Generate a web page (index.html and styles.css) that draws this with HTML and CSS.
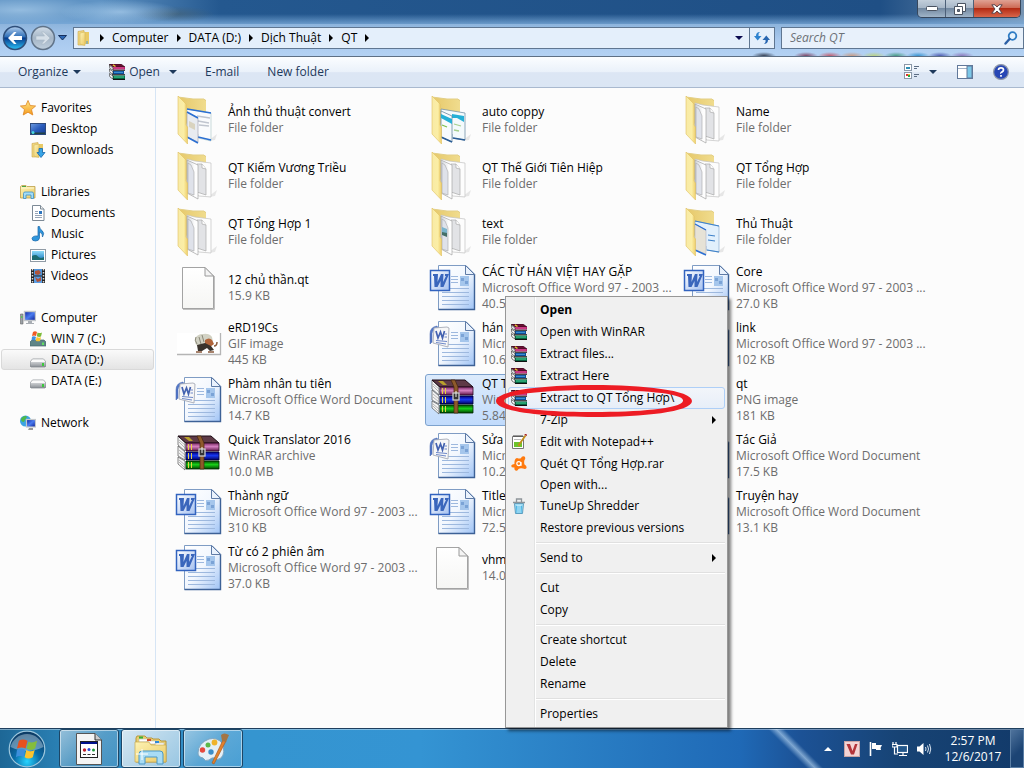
FILE: index.html
```html
<!DOCTYPE html>
<html lang="vi">
<head>
  <meta charset="UTF-8" />
  <meta name="viewport" content="width=device-width, initial-scale=1.0">
  <title>QT</title>
  <link rel="stylesheet" href="styles.css">
</head>
<body>

  <!-- Icon Sprites -->
  <svg class="sprites" aria-hidden="true">
    <defs>
      <linearGradient id="gFolder" x1="0" x2="1" y1="0" y2="1"><stop offset="0" stop-color="#fdf3b4"/><stop offset="1" stop-color="#ecca66"/></linearGradient>
      <linearGradient id="gFlap" x1="0" x2="1"><stop offset="0" stop-color="#f8eaa6"/><stop offset=".6" stop-color="#fbeea5"/><stop offset="1" stop-color="#efcf6c"/></linearGradient>
      <linearGradient id="gBack" x1="0" x2="1"><stop offset="0" stop-color="#e6c869"/><stop offset="1" stop-color="#f0dc8e"/></linearGradient>
      <linearGradient id="gLeaf" x1="0" x2="1"><stop offset="0" stop-color="#cfd3da"/><stop offset=".7" stop-color="#fdfdfd"/><stop offset="1" stop-color="#fff"/></linearGradient>
      <linearGradient id="gSheet" x1="0" x2="1" y1="0" y2="1"><stop offset="0" stop-color="#fff"/><stop offset=".5" stop-color="#f2f7fe"/><stop offset="1" stop-color="#9fc3f5"/></linearGradient>
      <linearGradient id="gPaper" x1="0" x2="0" y1="0" y2="1"><stop offset="0" stop-color="#fff"/><stop offset="1" stop-color="#f6f6f4"/></linearGradient>
      <linearGradient id="gW" x1="0" x2="1" y1="0" y2="1"><stop offset="0" stop-color="#fff"/><stop offset="1" stop-color="#a4c0f0"/></linearGradient>
      <linearGradient id="gPink" x1="0" x2="0" y1="0" y2="1"><stop offset="0" stop-color="#7c2b66"/><stop offset=".45" stop-color="#d480c0"/><stop offset="1" stop-color="#5c1548"/></linearGradient>
      <linearGradient id="gNavy" x1="0" x2="0" y1="0" y2="1"><stop offset="0" stop-color="#00007c"/><stop offset=".45" stop-color="#1838f0"/><stop offset="1" stop-color="#00005e"/></linearGradient>
      <linearGradient id="gGreen" x1="0" x2="0" y1="0" y2="1"><stop offset="0" stop-color="#004d00"/><stop offset=".45" stop-color="#18d018"/><stop offset="1" stop-color="#004400"/></linearGradient>
      <linearGradient id="gNavBtn" x1="0" x2="0" y1="0" y2="1"><stop offset="0" stop-color="#b5d0ee"/><stop offset=".45" stop-color="#2f6fb8"/><stop offset=".5" stop-color="#073a8c"/><stop offset="1" stop-color="#2cc3f7"/></linearGradient>
      <linearGradient id="gNavOff" x1="0" x2="0" y1="0" y2="1"><stop offset="0" stop-color="#d2dde8"/><stop offset=".5" stop-color="#a4b5c6"/><stop offset="1" stop-color="#c0cfdd"/></linearGradient>
      <linearGradient id="gScreen" x1="0" x2="1" y1="0" y2="1"><stop offset="0" stop-color="#0a1f9c"/><stop offset=".5" stop-color="#4a7cf0"/><stop offset="1" stop-color="#0a1a90"/></linearGradient>
      <linearGradient id="gDesk" x1="0" x2="1" y1="0" y2="1"><stop offset="0" stop-color="#6d9be0"/><stop offset=".5" stop-color="#2a5cbc"/><stop offset="1" stop-color="#163c92"/></linearGradient>
      <linearGradient id="gDrive" x1="0" x2="0" y1="0" y2="1"><stop offset="0" stop-color="#f2f3f4"/><stop offset="1" stop-color="#8b9096"/></linearGradient>
      <linearGradient id="gSky" x1="0" x2="0" y1="0" y2="1"><stop offset="0" stop-color="#8fdcf8"/><stop offset="1" stop-color="#1878c0"/></linearGradient>
      <radialGradient id="gOrb" cx=".5" cy=".85" r=".8"><stop offset="0" stop-color="#27d4ff"/><stop offset=".45" stop-color="#0b6da8"/><stop offset="1" stop-color="#0d3c66"/></radialGradient>
      <linearGradient id="gStar" x1="0" x2="0" y1="0" y2="1"><stop offset="0" stop-color="#ffe98a"/><stop offset="1" stop-color="#f59a1c"/></linearGradient>
    </defs>

    <!-- folder shell, the papers are drawn on top by each folder kind -->
    <symbol id="folder-back" viewBox="0 0 48 48">
      <path d="M33 45L42 38L40 44z" fill="#ddd" opacity=".7"/>
      <path d="M3 1L18 3L29 3Q31 3 31 5V30H12z" fill="url(#gBack)"/>
      <path d="M3 1L18 3H29L31 5" fill="none" stroke="#e3cf86"/>
    </symbol>
    <symbol id="folder-flap" viewBox="0 0 48 48">
      <path d="M3 0L11 8V29L12.500 31V48L3 38z" fill="url(#gFlap)" stroke="#e0c160" stroke-width=".6"/>
    </symbol>
    <symbol id="folder" viewBox="0 0 48 48">
      <use href="#folder-back"/>
      <path d="M12 7L20 9L36 11V45L24 44L12 38z" fill="#fdfdfd" stroke="#c2c2c2" stroke-width=".7"/>
      <path d="M22 12L27 12L31 17V43L22 40z" fill="#e2e3e6" stroke="#a9a9a9" stroke-width=".7"/>
      <path d="M27 12V16L31 17" fill="#fff" stroke="#a9a9a9" stroke-width=".7"/>
      <path d="M12 8L23 13V47L12 41z" fill="url(#gLeaf)" stroke="#a4a4a4" stroke-width=".7"/>
      <path d="M13 11L16 13L19 20V43L13 41z" fill="#dfe2ea" stroke="#a9a9a9" stroke-width=".6"/>
      <use href="#folder-flap"/>
    </symbol>
    <symbol id="folder-pages" viewBox="0 0 48 48">
      <use href="#folder-back"/>
      <path d="M12 13L36 17V45L23 42V38L12 36z" fill="#fafbfd" stroke="#9bb"  stroke-width=".5"/>
      <path d="M12 13L36 17M23 41L36 44" stroke="#2b6fd2" stroke-width="1.400"/>
      <path d="M22 20L35 22M23 25L34 27M24 29L34 30" stroke="#c0c5cf" stroke-width="1.600"/>
      <path d="M12 16L23 22V46L12 41z" fill="#e8ebf0" stroke="#99a" stroke-width=".6"/>
      <path d="M12 16L23 22M12 41L23 47" stroke="#2b6fd2" stroke-width="1.600"/>
      <path d="M14 25L20 28V34L14 31z" fill="#d9d3bf"/>
      <use href="#folder-flap"/>
    </symbol>
    <symbol id="folder-blue" viewBox="0 0 48 48">
      <use href="#folder-back"/>
      <path d="M12 13L36 17V44L23 42V38L12 36z" fill="#f4fafc" stroke="#7592a8" stroke-width=".8"/>
      <path d="M23 18L35 20V26L28 22L23 22z" fill="#25b0d6"/>
      <path d="M25 28L32 30M25 34L30 35" stroke="#a5cf8d" stroke-width="1.300"/>
      <path d="M12 15L23 20V46L12 41z" fill="#f7fbfd" stroke="#6a88a0" stroke-width=".8"/>
      <path d="M12 18L23 23V28L12 22z" fill="#25b0d6"/>
      <path d="M13 29L18 31" stroke="#7cc04d" stroke-width="1.300"/>
      <path d="M12 41L23 46M24 42L36 44" stroke="#2a5d96" stroke-width="1.600"/>
      <use href="#folder-flap"/>
    </symbol>
    <symbol id="folder-lines" viewBox="0 0 48 48">
      <use href="#folder-back"/>
      <path d="M12 13L36 18V44L23 42V38L12 36z" fill="#e2f0fc" stroke="#8aaed0" stroke-width=".7"/>
      <path d="M12 13L36 18M25 27L32 28M25 32L32 33M24 42L36 44" stroke="#3d80c9" stroke-width="1.200"/>
      <path d="M12 16L23 22V46L12 42z" fill="#e6e2d6" stroke="#aab" stroke-width=".5"/>
      <path d="M12 16L23 22M12 42L23 47" stroke="#2b6fd2" stroke-width="1.400"/>
      <use href="#folder-flap"/>
    </symbol>
    <symbol id="folder-text" viewBox="0 0 48 48">
      <use href="#folder"/>
      <path d="M13 19L18 21V28L13 26z" fill="#7ab4cc"/>
      <path d="M13 24L18 25V29L13 27z" fill="#456f68"/>
    </symbol>

    <symbol id="blank" viewBox="0 0 48 48">
      <path d="M7.500 3.500H30L38.500 12V44.500H7.500z" fill="url(#gPaper)" stroke="#a3a3a3"/>
      <path d="M39.500 12V45.500H8" fill="none" stroke="#c0c0c0"/>
      <path d="M30 3.500V12H38.500z" fill="#f4f4f4" stroke="#9a9a9a"/>
    </symbol>

    <symbol id="page" viewBox="0 0 48 48">
      <path d="M9.500 1.500H37L45.500 10V45.500H9.500z" fill="url(#gSheet)" stroke="#7f9cc4"/>
      <path d="M45.500 10V45.500H9.500" fill="none" stroke="#3d6196" stroke-width="1.400"/>
      <path d="M36.500 1.500V10.500H45.500z" fill="#eaf2fd" stroke="#5f7ba6"/>
      <path d="M22 12.500H29M22 15.500H29M22 18.500H29M13 24.500H40M13 28.500H40M13 32.500H40M13 36.500H40M13 40.500H40" stroke="#9db8de"/>
      <rect x="31" y="12" width="9" height="10" fill="#a5c6ec"/><path d="M32 14h3v3h-3zM36 17h3v3h-3z" fill="#7ba3d6"/>
    </symbol>
    <symbol id="doc" viewBox="0 0 48 48">
      <use href="#page"/>
      <rect x="1.500" y="6.500" width="19" height="20" fill="url(#gW)" stroke="#3263bf" stroke-width="1.500"/>
      <path d="M4 10H9L8.500 18L12 10H14.500L14 18L17 12H16V10H20L14.500 23H11.500L11.500 17L8.500 23H5.500L5 12H4z" fill="#3a66bc"/>
    </symbol>
    <symbol id="docx" viewBox="0 0 48 48">
      <use href="#page"/>
      <path d="M8 6Q1 7 1 14V24L3 22V13Q4 9 9 8z" fill="#5478c6" stroke="#3c5fae" stroke-width=".5"/>
      <path d="M5 8L18 7L20 8L19 27L4 23z" fill="#f7f7f8" stroke="#a6aab6" stroke-width=".9"/>
      <path d="M7 11L9 18L11.500 12L13.500 18L15.500 11" fill="none" stroke="#4462b0" stroke-width="1.700"/>
      <path d="M15.500 14H18M15.500 17H18M7 20.500L18 21.500M7 22.500L17 24" stroke="#6e88c8"/>
    </symbol>

    <symbol id="rar" viewBox="0 0 48 48">
      <path d="M3 4L10 11V19L3 13zM3 14L10 20V28L3 24zM3 25L10 29V38L3 32z" fill="#f4f4f4" stroke="#555" stroke-width=".7"/>
      <path d="M4 8L10 13M4 10L10 16M4 18L10 23M4 21L10 26M4 28L10 33M4 30L10 36" stroke="#999" stroke-width=".7"/>
      <path d="M3 4H36L44 11H11z" fill="#5e3a46" stroke="#1d0a14"/>
      <path d="M9 5H14L18 9H14z" fill="#b9a02c"/>
      <path d="M11 11H44V19H11z" fill="url(#gPink)" stroke="#2b0b22" stroke-width=".8"/>
      <path d="M11 20H44V28H11z" fill="url(#gNavy)" stroke="#000035" stroke-width=".8"/>
      <path d="M11 29H44V37H11z" fill="url(#gGreen)" stroke="#002600" stroke-width=".8"/>
      <path d="M13.500 12V18M16.500 12V18M13.500 21V27M16.500 21V27M13.500 30V36M16.500 30V36" stroke="#e5d340"/>
      <path d="M22 4H26L29 11V37H25V11z" fill="#8e5a2b" stroke="#45270d" stroke-width=".7"/>
      <rect x="24" y="17" width="6" height="7" fill="#333" stroke="#ccc" stroke-width="1.300"/><path d="M27 15V21" stroke="#eee"/>
    </symbol>
    <symbol id="rar-small" viewBox="0 0 16 16">
      <path d="M0 0H12L16 3H4z" fill="#6a0f34" stroke="#25040f" stroke-width=".6"/>
      <path d="M4 3H16V5.500H4z" fill="#b8206e"/><path d="M4 4H15" stroke="#ea6aae" stroke-width=".7"/>
      <path d="M3 7H15V10H4z" fill="#0b4d9c"/><path d="M5 8.300H14" stroke="#55b4e8" stroke-width=".8"/>
      <path d="M3 11.500H16V15H4z" fill="#047a4e"/><path d="M5 13H15" stroke="#5fe0a8" stroke-width=".8"/>
      <path d="M0 1L4 4V6L1 4.500zM0 5L4 7.500V10L1 8.500zM0 9.500L4 12V15L1 13z" fill="#fff" stroke="#222" stroke-width=".6"/>
      <path d="M4 6.200H16M3 10.700H16M4 15.400H16" stroke="#111" stroke-width="1.100"/><path d="M4 .8L6.500 2.500" stroke="#e6c52e" stroke-width="1.500"/>
    </symbol>

    <symbol id="gif" viewBox="0 0 48 48">
      <rect x="2" y="13" width="43" height="21" fill="#fff"/>
      <path d="M45.500 13V34.500H2" fill="none" stroke="#b5b5b5" stroke-width="1.300"/>
      <path d="M20 19Q22 14 28 14Q34 13 37 17L38 22L35 27H24Q19 24 20 19z" fill="#d2d2c4"/>
      <path d="M22 24Q19 20 21 17M27 15L29 22M24 17L26 24" stroke="#8a8878" fill="none"/>
      <path d="M30 20Q34 17 37 20L39 24L35 27L30 25z" fill="#b0643a"/>
      <path d="M22 25L30 23L36 26L39 30L35 31L32 28L27 31H23z" fill="#3a332c"/>
      <path d="M21 32H27M33 32H39M39 26Q42 26 42 22" stroke="#8a5a3c" stroke-width="1.500" fill="none"/>
    </symbol>

    <symbol id="folder-small" viewBox="0 0 16 16">
      <path d="M2 1.500L8 .5V15H2z" fill="#f1d880" stroke="#c9a548" stroke-width=".6"/>
      <path d="M8 2H13V14H8z" fill="#e9ca66"/><path d="M4 3L9 2V15.500L4 14z" fill="url(#gFolder)" stroke="#d5b75c" stroke-width=".6"/>
      <path d="M11 11V14" stroke="#4d9bd8"/>
    </symbol>
    <symbol id="star" viewBox="0 0 16 16"><path d="M8 .5L10.200 5.500L15.600 6L11.500 9.600L12.800 15L8 12.200L3.200 15L4.500 9.600L.4 6L5.800 5.500z" fill="url(#gStar)" stroke="#de8521" stroke-width=".8"/></symbol>
    <symbol id="desktop" viewBox="0 0 16 16"><rect x=".5" y="2.500" width="15" height="11" fill="url(#gDesk)" stroke="#2d4a7c"/><path d="M1 11.500H15V13H1z" fill="#244"/><circle cx="3" cy="11.500" r="1.500" fill="#49d6e0"/></symbol>
    <symbol id="download" viewBox="0 0 16 16"><use href="#folder-small"/><path d="M9 6.500H12.500V10.500H15L11 15.500L7 10.500H9z" fill="#38a4e6" stroke="#1668ae" stroke-width=".8"/></symbol>
    <symbol id="library" viewBox="0 0 16 16"><path d="M.5 2.500L2 1.500H6L7 2.500H15V14H.5z" fill="url(#gFolder)" stroke="#bd9f4a" stroke-width=".8"/><path d="M1 4H14" stroke="#fff9d3"/><path d="M2 2.500H6" stroke="#48a848"/><path d="M3.500 14.500V9.500Q3.500 8 5 8H12Q13.500 8 13.500 9.500V14.500H11V11H6V14.500z" fill="#a3dcf6" stroke="#3a8fc8" stroke-width=".8"/></symbol>
    <symbol id="documents" viewBox="0 0 16 16"><path d="M2.500.5H10.500L14 4V15.500H2.500z" fill="#fff" stroke="#7d8a96"/><path d="M10.500.5V4H14" fill="#eee" stroke="#7d8a96"/><path d="M5 6.500H8M5 8.500H8M5 10.500H12M5 12.500H12" stroke="#8b9aae" stroke-width=".9"/><rect x="9" y="6" width="3" height="3" fill="#2d74bd"/></symbol>
    <symbol id="music" viewBox="0 0 16 16"><path d="M8 .5H9.500Q9.500 3 12 4.500Q15 7 12.500 11Q13 7 9.500 6V12Q9 15 5.500 15Q2 15 2 12.500Q2.500 9.500 8 10z" fill="#2f96dc" stroke="#1764a6" stroke-width=".7"/></symbol>
    <symbol id="pictures" viewBox="0 0 16 16"><rect x=".5" y="2.500" width="15" height="12" fill="#fff" stroke="#909ba5"/><rect x="2" y="4" width="12" height="9" fill="url(#gSky)"/><path d="M2 9Q6 7 8 9.500T14 10V13H2z" fill="#1c6c70"/></symbol>
    <symbol id="videos" viewBox="0 0 16 16"><path d="M1 1H15V15H1z" fill="#222"/><path d="M4 1H12V7.500H4z" fill="#4f93d8"/><path d="M4 8.500H12V15H4z" fill="#5b9fe6"/><path d="M5 3L9 2L11 5L8 7L5 6zM5 9L8 11L11 9V13L7 14z" fill="#b0543a"/><path d="M2.500 1V15M13.500 1V15" stroke="#ddd" stroke-width="1.500" stroke-dasharray="1.500 1.500"/></symbol>
    <symbol id="computer" viewBox="0 0 16 16"><rect x="4.500" y="1.500" width="11" height="9" fill="url(#gScreen)" stroke="#c2c6ca" stroke-width="1.400"/><path d="M8 11H12V13H14V14H6V13H8z" fill="#a9aeb4"/><path d="M.5 4H3V14H.5z" fill="#9ca2a8" stroke="#666" stroke-width=".6"/><path d="M1.800 6V8" stroke="#3fd43f"/></symbol>
    <symbol id="drive" viewBox="0 0 16 16"><path d="M2.500 7H13.500L16 10V14L15 15H1L0 14V10z" fill="url(#gDrive)" stroke="#7f858b" stroke-width=".7"/><path d="M2.500 7.500H13.500L15.500 10H.5z" fill="#fafafa"/><rect x="12" y="11" width="2" height="3" fill="#3cc83c"/></symbol>
    <symbol id="windrive" viewBox="0 0 16 16"><path d="M2 9H14L16 11V15H0V11z" fill="#5f8587" stroke="#48686c" stroke-width=".7"/><rect x="12" y="11.500" width="2" height="2.500" fill="#62e062"/><path d="M3 1Q5-.3 7 1L6 5Q4 4 2 5z" fill="#ee5a24"/><path d="M7.500 1.500Q10 2.500 12 1.500L11 5.500Q9 6.500 6.800 5.200z" fill="#7dbb3a"/><path d="M2 5.800Q4 4.800 6 6L5 9.500Q3 8.500 1.500 9.500z" fill="#3f8fe0"/><path d="M6.600 6Q9 7.200 11 6.200L10 10Q8 10.800 5.700 9.700z" fill="#fbc42e"/></symbol>
    <symbol id="network" viewBox="0 0 16 16"><circle cx="5.500" cy="6" r="5.500" fill="#3ba3e2"/><path d="M2 2.500Q6 0 7 2Q5 4 4 7Q1 7 1 4zM6 6Q9 6 8 9L6 11z" fill="#4fb947"/><rect x="6.500" y="4.500" width="9" height="7.500" fill="url(#gScreen)" stroke="#c4c8cc" stroke-width="1.200"/><path d="M9 13H13V15H8z" fill="#999"/></symbol>

    <symbol id="flag-win" viewBox="0 0 24 24"><path d="M3 4Q7 1 12 4L10 12Q6 10 1 12z" fill="#e6511e"/><path d="M13 5Q17 7 22 4L20 12Q16 15 11 12z" fill="#84bd3c"/><path d="M1 13.500Q6 11 9.700 13.500L8 21Q4 18.500 0 21z" fill="#3d8fdc"/><path d="M10.700 13.500Q15 16 19.500 13.500L17.500 21Q13 24 9 21z" fill="#fcc32f"/></symbol>
  </svg>

  <!-- Title Bar -->
  <header class="title-bar">
    <div class="window-controls">
      <button class="win-btn" aria-label="Minimize"><svg width="12" height="5"><rect x=".5" y=".5" width="11" height="4" rx="1" fill="#fff" stroke="#4a5361"/></svg></button>
      <button class="win-btn" aria-label="Restore"><svg width="12" height="12"><path d="M3.500.5H11.500V8.500H3.500z" fill="#fff" stroke="#4a5361"/><path d="M.5 3.500H8.500V11.500H.5z" fill="#fff" stroke="#4a5361"/><path d="M3.500 6.500H5.500V8.500H3.500z" fill="#6b7787" stroke="#4a5361"/></svg></button>
      <button class="win-btn win-close" aria-label="Close"><svg width="12" height="10"><path d="M.8.8H4L6 3L8 .8H11.200L8 5L11.200 9.200H8L6 7L4 9.200H.8L4 5z" fill="#fff" stroke="#58424a"/></svg></button>
    </div>
  </header>

  <!-- Address Row -->
  <div class="address-row">
    <div class="nav-buttons">
      <button class="round-btn" aria-label="Back"><svg width="26" height="26" viewBox="0 0 26 26"><circle cx="13" cy="13" r="11.500" fill="url(#gNavBtn)" stroke="#2f4f7a" stroke-width="1.500"/><path d="M6 13L12 7H14.500L11.500 11H20V15H11.500L14.500 19H12z" fill="#fff"/></svg></button>
      <button class="round-btn" aria-label="Forward"><svg width="26" height="26" viewBox="0 0 26 26"><circle cx="13" cy="13" r="11.500" fill="url(#gNavOff)" stroke="#607388" stroke-width="1.500"/><path d="M20 13L14 7H11.500L14.500 11H6V15H14.500L11.500 19H14z" fill="#d5dfe8" stroke="#a9b8c6" stroke-width=".6"/></svg></button>
      <button class="round-btn" aria-label="Recent pages"><svg width="9" height="6"><path d="M.5.5H8.500L4.500 5z" fill="#2c67b5" stroke="#16305e"/></svg></button>
    </div>
    <nav class="address-bar">
      <svg class="icon"><use href="#folder-small"/></svg>
      <span class="tri"></span>
      <a href="#">Computer</a><span class="tri"></span>
      <a href="#">DATA (D:)</a><span class="tri"></span>
      <a href="#">Dịch Thuật</a><span class="tri"></span>
      <a href="#">QT</a><span class="tri"></span>
      <span class="spacer"></span>
      <button class="history-btn" aria-label="Previous locations"><span class="caret"></span></button>
      <button class="refresh-btn" aria-label="Refresh"><svg width="16" height="14" viewBox="0 0 16 14"><path d="M6 1Q4 2 4.500 5H7.500L3.700 9.500L0 5H2Q2 1 6 1z" fill="#2e83cf"/><path d="M9.500 13Q12 12 11.500 9H8.500L12.300 4.500L16 9H14Q14 13 9.500 13z" fill="#2866b0"/></svg></button>
    </nav>
    <label class="search-box">
      <input type="search" placeholder="Search QT" aria-label="Search QT">
      <svg width="14" height="14" viewBox="0 0 14 14"><circle cx="8.500" cy="5" r="3.800" fill="#e8f4fd" stroke="#2f7cc4" stroke-width="1.800"/><path d="M5.500 8L1.500 12.500" stroke="#2b5fa5" stroke-width="2.400" stroke-linecap="round"/></svg>
    </label>
  </div>

  <!-- Command Bar -->
  <div class="command-bar">
    <button class="cmd">Organize <span class="caret"></span></button>
    <button class="cmd cmd-open"><svg class="icon"><use href="#rar-small"/></svg>Open <span class="caret"></span></button>
    <button class="cmd">E-mail</button>
    <button class="cmd">New folder</button>
    <span class="spacer"></span>
    <div class="view-tools">
      <button class="cmd cmd-view" aria-label="Change your view"><svg class="icon" viewBox="0 0 16 16"><rect x=".5" y=".5" width="7" height="6" fill="#fff" stroke="#8a98a8"/><path d="M2 3H6V5H2z" fill="#2e8fb5"/><rect x=".5" y="8.500" width="7" height="6" fill="#fff" stroke="#8a98a8"/><path d="M2 10H4V12H2z" fill="#d33"/><path d="M4 11H6V13H4z" fill="#2a4"/><path d="M4 10H6V11H4z" fill="#eb3"/><path d="M10 2.500H15M10 4.500H13M10 10.500H15M10 12.500H13" stroke="#5e6f85"/></svg><span class="caret"></span></button>
      <button class="cmd" aria-label="Show the preview pane"><svg class="icon" viewBox="0 0 16 16"><rect x=".5" y="1.500" width="15" height="13" fill="#fff" stroke="#61789a"/><path d="M1 4.500H10" stroke="#9fb0c5"/><path d="M10 2H15V14H10z" fill="#7cc8e8" stroke="#61789a"/></svg></button>
      <button class="cmd" aria-label="Help"><svg class="icon" viewBox="0 0 16 16"><circle cx="8" cy="8" r="7.400" fill="#2747b5" stroke="#8f98a8" stroke-width="1.200"/><path d="M5.500 6Q5.500 3.800 8 3.800T10.500 6Q10.500 7 9 8T8 9.500M8 11V12.700" fill="none" stroke="#fff" stroke-width="1.700"/></svg></button>
    </div>
  </div>

  <main class="explorer">
    <!-- Navigation Pane -->
    <aside class="nav-pane">
      <div class="nav-group">
        <a class="nav-item" href="#"><svg class="icon"><use href="#star"/></svg>Favorites</a>
        <a class="nav-item child" href="#"><svg class="icon"><use href="#desktop"/></svg>Desktop</a>
        <a class="nav-item child" href="#"><svg class="icon"><use href="#download"/></svg>Downloads</a>
      </div>
      <div class="nav-group">
        <a class="nav-item" href="#"><svg class="icon"><use href="#library"/></svg>Libraries</a>
        <a class="nav-item child" href="#"><svg class="icon"><use href="#documents"/></svg>Documents</a>
        <a class="nav-item child" href="#"><svg class="icon"><use href="#music"/></svg>Music</a>
        <a class="nav-item child" href="#"><svg class="icon"><use href="#pictures"/></svg>Pictures</a>
        <a class="nav-item child" href="#"><svg class="icon"><use href="#videos"/></svg>Videos</a>
      </div>
      <div class="nav-group">
        <a class="nav-item" href="#"><svg class="icon"><use href="#computer"/></svg>Computer</a>
        <a class="nav-item child" href="#"><svg class="icon"><use href="#windrive"/></svg>WIN 7 (C:)</a>
        <a class="nav-item child active" href="#"><svg class="icon"><use href="#drive"/></svg>DATA (D:)</a>
        <a class="nav-item child" href="#"><svg class="icon"><use href="#drive"/></svg>DATA (E:)</a>
      </div>
      <div class="nav-group">
        <a class="nav-item" href="#"><svg class="icon"><use href="#network"/></svg>Network</a>
      </div>
    </aside>

    <!-- File List -->
    <section class="files">
      <div class="file"><svg class="thumb"><use href="#folder-pages"/></svg><div class="info"><p class="name">Ảnh thủ thuật convert</p><p>File folder</p></div></div>
      <div class="file"><svg class="thumb"><use href="#folder-blue"/></svg><div class="info"><p class="name">auto coppy</p><p>File folder</p></div></div>
      <div class="file"><svg class="thumb"><use href="#folder"/></svg><div class="info"><p class="name">Name</p><p>File folder</p></div></div>

      <div class="file"><svg class="thumb"><use href="#folder"/></svg><div class="info"><p class="name">QT Kiếm Vương Triều</p><p>File folder</p></div></div>
      <div class="file"><svg class="thumb"><use href="#folder"/></svg><div class="info"><p class="name">QT Thế Giới Tiên Hiệp</p><p>File folder</p></div></div>
      <div class="file"><svg class="thumb"><use href="#folder"/></svg><div class="info"><p class="name">QT Tổng Hợp</p><p>File folder</p></div></div>

      <div class="file"><svg class="thumb"><use href="#folder"/></svg><div class="info"><p class="name">QT Tổng Hợp 1</p><p>File folder</p></div></div>
      <div class="file"><svg class="thumb"><use href="#folder-text"/></svg><div class="info"><p class="name">text</p><p>File folder</p></div></div>
      <div class="file"><svg class="thumb"><use href="#folder-lines"/></svg><div class="info"><p class="name">Thủ Thuật</p><p>File folder</p></div></div>

      <div class="file"><svg class="thumb"><use href="#blank"/></svg><div class="info"><p class="name">12 chủ thần.qt</p><p>15.9 KB</p></div></div>
      <div class="file"><svg class="thumb"><use href="#doc"/></svg><div class="info"><p class="name">CÁC TỪ HÁN VIỆT HAY GẶP</p><p>Microsoft Office Word 97 - 2003 ...</p><p>40.5 KB</p></div></div>
      <div class="file"><svg class="thumb"><use href="#doc"/></svg><div class="info"><p class="name">Core</p><p>Microsoft Office Word 97 - 2003 ...</p><p>27.0 KB</p></div></div>

      <div class="file"><svg class="thumb"><use href="#gif"/></svg><div class="info"><p class="name">eRD19Cs</p><p>GIF image</p><p>445 KB</p></div></div>
      <div class="file"><svg class="thumb"><use href="#docx"/></svg><div class="info"><p class="name">hán</p><p>Microsoft Office Word Document</p><p>10.6 KB</p></div></div>
      <div class="file"><svg class="thumb"><use href="#doc"/></svg><div class="info"><p class="name">link</p><p>Microsoft Office Word 97 - 2003 ...</p><p>102 KB</p></div></div>

      <div class="file"><svg class="thumb"><use href="#docx"/></svg><div class="info"><p class="name">Phàm nhân tu tiên</p><p>Microsoft Office Word Document</p><p>14.7 KB</p></div></div>
      <div class="file selected"><svg class="thumb"><use href="#rar"/></svg><div class="info"><p class="name">QT Tổng Hợp</p><p>WinRAR archive</p><p>5.84 MB</p></div></div>
      <div class="file"><svg class="thumb"><use href="#blank"/></svg><div class="info"><p class="name">qt</p><p>PNG image</p><p>181 KB</p></div></div>

      <div class="file"><svg class="thumb"><use href="#rar"/></svg><div class="info"><p class="name">Quick Translator 2016</p><p>WinRAR archive</p><p>10.0 MB</p></div></div>
      <div class="file"><svg class="thumb"><use href="#docx"/></svg><div class="info"><p class="name">Sửa</p><p>Microsoft Office Word Document</p><p>10.2 KB</p></div></div>
      <div class="file"><svg class="thumb"><use href="#docx"/></svg><div class="info"><p class="name">Tác Giả</p><p>Microsoft Office Word Document</p><p>17.5 KB</p></div></div>

      <div class="file"><svg class="thumb"><use href="#doc"/></svg><div class="info"><p class="name">Thành ngữ</p><p>Microsoft Office Word 97 - 2003 ...</p><p>310 KB</p></div></div>
      <div class="file"><svg class="thumb"><use href="#doc"/></svg><div class="info"><p class="name">Title</p><p>Microsoft Office Word 97 - 2003 ...</p><p>72.5 KB</p></div></div>
      <div class="file"><svg class="thumb"><use href="#docx"/></svg><div class="info"><p class="name">Truyện hay</p><p>Microsoft Office Word Document</p><p>13.1 KB</p></div></div>

      <div class="file"><svg class="thumb"><use href="#doc"/></svg><div class="info"><p class="name">Từ có 2 phiên âm</p><p>Microsoft Office Word 97 - 2003 ...</p><p>37.0 KB</p></div></div>
      <div class="file"><svg class="thumb"><use href="#blank"/></svg><div class="info"><p class="name">vhm</p><p>14.0 KB</p></div></div>
    </section>
  </main>

  <!-- Context Menu -->
  <div class="context-menu" role="menu">
    <button class="menu-item default" role="menuitem">Open</button>
    <button class="menu-item" role="menuitem"><svg class="icon"><use href="#rar-small"/></svg>Open with WinRAR</button>
    <button class="menu-item" role="menuitem"><svg class="icon"><use href="#rar-small"/></svg>Extract files...</button>
    <button class="menu-item" role="menuitem"><svg class="icon"><use href="#rar-small"/></svg>Extract Here</button>
    <button class="menu-item hover" role="menuitem"><svg class="icon"><use href="#rar-small"/></svg>Extract to QT Tổng Hợp\</button>
    <button class="menu-item" role="menuitem">7-Zip<span class="tri"></span></button>
    <button class="menu-item" role="menuitem"><svg class="icon" viewBox="0 0 16 16"><path d="M1.500 2.500H12.500V14.500H1.500z" fill="#fff" stroke="#777"/><path d="M3 1V3M5 1V3M7 1V3M9 1V3M11 1V3" stroke="#444"/><path d="M3 8H11V13H3z" fill="#6cc32c"/><path d="M3 5.500H10" stroke="#bbb"/><path d="M14.500 1.500L8.500 10L7.500 12" stroke="#c58f1c" stroke-width="1.800"/><path d="M13.800 0L15.800 1.500" stroke="#a22" stroke-width="1.500"/></svg>Edit with Notepad++</button>
    <button class="menu-item compact" role="menuitem"><svg class="icon" viewBox="0 0 16 16"><path d="M6 2Q9 3 10 2Q11-.3 13.500 .6Q15 2 13.500 4Q12.800 6 13.500 8.500Q16 10 15.500 12Q14.500 13.500 12 12.500Q9 12 7.500 13Q6.500 15.500 4.500 14.500Q3 13.500 3.500 11.500Q0 12 .3 9.500Q1 8 3.500 8Q3 3 6 2z" fill="#ff7a0e"/><circle cx="7.800" cy="7.600" r="2" fill="none" stroke="#fff" stroke-width="1.200"/><path d="M10 6V10" stroke="#fff"/></svg>Quét QT Tổng Hợp.rar</button>
    <button class="menu-item compact" role="menuitem">Open with...</button>
    <button class="menu-item" role="menuitem"><svg class="icon" viewBox="0 0 16 16"><path d="M3.500 5.500H12.500L11.500 15.500H4.500z" fill="#9fdcf5" stroke="#5b9ec0"/><path d="M5 8H11L10.500 15H5.500z" fill="#49b6e6"/><path d="M7 7V15M9 7V15" stroke="#d8f2fc"/><path d="M2 4.500H14M5.500 4V1H10.500V4" fill="none" stroke="#8d9499" stroke-width="1.300"/></svg>TuneUp Shredder</button>
    <button class="menu-item" role="menuitem">Restore previous versions</button>
    <hr>
    <button class="menu-item" role="menuitem">Send to<span class="tri"></span></button>
    <hr>
    <button class="menu-item" role="menuitem">Cut</button>
    <button class="menu-item" role="menuitem">Copy</button>
    <hr>
    <button class="menu-item" role="menuitem">Create shortcut</button>
    <button class="menu-item" role="menuitem">Delete</button>
    <button class="menu-item" role="menuitem">Rename</button>
    <hr>
    <button class="menu-item" role="menuitem">Properties</button>
    <!-- red marker round the extract command -->
    <svg class="marker" viewBox="0 0 196 32"><path fill-rule="evenodd" fill="#ed1c24" d="M0 16C0 5 50 0 98 0S196 5 196 16S146 32 98 32S0 27 0 16zM8 16C10 24 55 27 98 27S185 24 187 16S145 5 98 5S8 9 8 16z"/></svg>
  </div>

  <!-- Taskbar -->
  <footer class="taskbar">
    <button class="start-btn" aria-label="Start"><svg width="40" height="38" viewBox="0 0 40 38"><circle cx="20" cy="19" r="17.800" fill="url(#gOrb)" stroke="#9cc6dc" stroke-width="1.200"/><path d="M3.500 17A17 17 0 0 1 36.500 17Q20 25 3.500 17z" fill="#dbe9f2" opacity=".4"/><use href="#flag-win" x="9" y="7" width="23" height="23"/></svg></button>
    <button class="task-btn" aria-label="Program"><svg width="26" height="32" viewBox="0 0 26 32"><path d="M.5.500H19L25.500 7V31.500H.500z" fill="#f4f4f4" stroke="#555"/><path d="M19 .5V7H25.500" fill="#ccc" stroke="#333"/><rect x="4.500" y="8.500" width="17" height="16" fill="#fff" stroke="#222"/><path d="M5 9H21V11H5z" fill="#00108c"/><circle cx="8.500" cy="17" r="1.700" fill="#c2202a"/><circle cx="13" cy="16.500" r="1.500" fill="#2744d6"/><circle cx="17.500" cy="17" r="1.500" fill="#1c9a3c"/><path d="M7 21.500H19" stroke="#333" stroke-dasharray="3 1.500"/></svg></button>
    <button class="task-btn open" aria-label="Windows Explorer"><svg width="34" height="32" viewBox="0 0 34 32"><path d="M2 5L3 3H11L13 5H18L19 6H25L27 8H32V29H2z" fill="#e9cf6e" stroke="#b8963e"/><path d="M5 6H14V9H5zM13 8H22V11H13zM21 10H30V13H21z" fill="#fff" stroke="#bbb" stroke-width=".6"/><path d="M5 4.500H9" stroke="#35b135" stroke-width="2"/><path d="M13 7H17" stroke="#d34a2c" stroke-width="2"/><path d="M21 9H25" stroke="#3089d8" stroke-width="2"/><path d="M1 9H15L17 12H32V29H1z" fill="url(#gFolder)" stroke="#c9a94f" stroke-width=".7"/><path d="M5 31V21Q5 18 8 18H26Q29 18 29 21V31H23V24H11V31z" fill="#a8dcf4" stroke="#4a98c6"/><path d="M8 16V27M2 21H14" stroke="#fff"/></svg></button>
    <button class="task-btn" aria-label="Paint"><svg width="32" height="32" viewBox="0 0 32 32"><path d="M1 20Q1 10 12 6Q20 4 25 10Q29 20 24 25Q20 28 18 25Q15 24 12 27Q8 29 6 25Q1 24 1 20z" fill="#e4eff7" stroke="#7fa5bf"/><circle cx="5.500" cy="17" r="2.700" fill="#e5483d"/><circle cx="11" cy="12" r="2.500" fill="#5cb848"/><circle cx="17.500" cy="9.500" r="2.900" fill="#efb32c"/><circle cx="14" cy="19" r="2.700" fill="#3b8dc8"/><path d="M26 7L29 8L17 31L15 30z" fill="#e2812c" stroke="#a3561b" stroke-width=".6"/><path d="M25 8L24 2Q27-1 32 2L29 9z" fill="#a37545"/></svg></button>
    <span class="spacer"></span>
    <div class="tray">
      <button class="tray-btn" aria-label="Show hidden icons"><svg class="icon"><path d="M4 10L8 6L12 10z" fill="#fff"/></svg></button>
      <button class="tray-btn" aria-label="Vietnamese keyboard"><svg class="icon"><rect x=".5" y=".5" width="15" height="15" fill="#f3d4d4" stroke="#c9a4a4"/><path d="M2.500 3H6L8.500 10L11 3H13.500L10 13.500H7z" fill="#b3343a"/></svg></button>
      <button class="tray-btn" aria-label="Action Center"><svg class="icon"><path d="M2.500 1V15" stroke="#fff" stroke-width="1.600"/><path d="M4 2H8V4H14L12.500 7L13 9H8V8H4z" fill="#fff"/></svg></button>
      <button class="tray-btn" aria-label="Network"><svg class="icon"><rect x="5.500" y="4.500" width="10" height="7" fill="#24588c" stroke="#fff" stroke-width="1.200"/><path d="M7 14.500H15M11 12V14M1 1V3M4 1V3M0 3.500H5V6H0zM2.500 6V13H6" fill="none" stroke="#fff" stroke-width="1.200"/></svg></button>
      <button class="tray-btn" aria-label="Volume"><svg class="icon"><path d="M1 5.500H3.500L7.500 2V14L3.500 10.500H1z" fill="#fff"/><path d="M9.500 6Q10.500 8 9.500 10M11.500 4.500Q13.500 8 11.500 11.500M13.500 3Q16 8 13.500 13" fill="none" stroke="#dbe6f1"/></svg></button>
      <button class="clock"><time>2:57 PM</time><time>12/6/2017</time></button>
      <button class="show-desktop" aria-label="Show desktop"></button>
    </div>
  </footer>
</body>
</html>
```

FILE: styles.css
```css
/* Basic Reset */
* {
  margin: 0;
  padding: 0;
  box-sizing: border-box;
}
body {
  height: 100vh;
  display: flex;
  flex-direction: column;
  overflow: hidden;
  background-color: #fcfcfc;
  font-family: "Open Sans", "Noto Sans", sans-serif;
  font-size: 12px;
  line-height: 16px;
  color: #000;
}
button {
  border: none;
  background: none;
  font: inherit;
  color: inherit;
  display: flex;
  align-items: center;
}
a {
  color: inherit;
  text-decoration: none;
}
.sprites {
  position: absolute;
  width: 0;
  height: 0;
}
.icon {
  width: 16px;
  height: 16px;
  flex: none;
}
.spacer {
  flex: 1;
}
.tri {
  border: 4px solid transparent;
  border-left: 4px solid #000;
  border-right: none;
}
.caret {
  border: 4px solid transparent;
  border-top: 4px solid #1e395b;
  border-bottom: none;
}

/* Title Bar */
.title-bar {
  flex: none;
  height: 24px;
  display: flex;
  justify-content: flex-end;
  padding-right: 3px;
  background:
    radial-gradient(ellipse 60px 12px at 120px 12px, rgba(175, 210, 240, 0.7), transparent),
    radial-gradient(ellipse 80px 14px at 20px 10px, rgba(170, 205, 235, 0.7), transparent),
    radial-gradient(ellipse 40px 8px at 175px 14px, rgba(70, 95, 110, 0.6), transparent),
    linear-gradient(to bottom, transparent 14px, rgba(125, 172, 218, 0.8)),
    linear-gradient(to right, #5f93c4 100px, #24588f 220px, #1f4f85 880px, #7794b2);
}
.window-controls {
  display: flex;
  height: 18px;
  border: 1px solid #37475c;
  border-top: none;
  border-radius: 0 0 5px 5px;
  overflow: hidden;
}
.win-btn {
  width: 28px;
  justify-content: center;
  border-right: 1px solid #4d6078;
  background: linear-gradient(#c3cfdb, #a4b4c5 50%, #7389a1 50%, #a0b4c8);
}
.win-close {
  width: 46px;
  border-right: none;
  background: linear-gradient(#e0a294, #cc6650 50%, #b32b14 50%, #d9664a);
}

/* Address Row */
.address-row {
  flex: none;
  height: 33px;
  display: flex;
  align-items: flex-start;
  gap: 6px;
  padding: 3px 0 0 2px;
  border-bottom: 1px solid #5d6f84;
  background:
    radial-gradient(ellipse 12px 4px at 764px 32px, rgba(20, 25, 40, 0.8), transparent),
    radial-gradient(ellipse 12px 4px at 806px 32px, rgba(110, 30, 60, 0.8), transparent),
    radial-gradient(ellipse 12px 4px at 830px 32px, rgba(200, 40, 50, 0.7), transparent),
    radial-gradient(ellipse 12px 4px at 852px 32px, rgba(210, 130, 80, 0.7), transparent),
    radial-gradient(ellipse 12px 4px at 874px 32px, rgba(190, 210, 80, 0.7), transparent),
    radial-gradient(ellipse 12px 4px at 896px 32px, rgba(20, 130, 80, 0.7), transparent),
    radial-gradient(ellipse 12px 4px at 918px 32px, rgba(20, 130, 200, 0.8), transparent),
    radial-gradient(ellipse 12px 4px at 940px 32px, rgba(50, 60, 160, 0.8), transparent),
    radial-gradient(ellipse 12px 4px at 962px 32px, rgba(110, 60, 150, 0.6), transparent),
    linear-gradient(#8db4dc, #a9c9ee 50%, #b3d1f3);
}
.nav-buttons {
  display: flex;
  align-items: center;
  gap: 2px;
  height: 22px;
}
.address-bar {
  flex: 1;
  height: 22px;
  display: flex;
  align-items: center;
  gap: 8px;
  padding-left: 2px;
  border: 1px solid #5f7691;
  background-color: #e4effb;
}
.history-btn {
  padding: 0 6px;
}
.history-btn .caret {
  border-top-color: #0a0a50;
}
.refresh-btn {
  height: 100%;
  margin-left: -8px;
  padding: 0 4px;
  border-left: 1px solid #5f7691;
}
.search-box {
  width: 243px;
  height: 22px;
  display: flex;
  align-items: center;
  padding: 0 5px 0 8px;
  border: 1px solid #5f7691;
  background-color: #e8f1fb;
}
.search-box input {
  flex: 1;
  min-width: 0;
  border: none;
  outline: none;
  background: none;
  font: inherit;
  font-style: italic;
}
.search-box input::placeholder {
  color: #6d7278;
}

/* Command Bar */
.command-bar {
  flex: none;
  height: 31px;
  display: flex;
  align-items: center;
  gap: 28px;
  padding: 0 15px 0 18px;
  color: #1e395b;
  background: linear-gradient(#fbfdff, #eaf1fa 50%, #dce6f4 52%, #dbe6f4);
  border-bottom: 1px solid #a9b9cf;
}
.cmd {
  gap: 5px;
}
.cmd-open {
  gap: 4px;
}
.cmd-open .caret {
  margin-left: 5px;
}
.view-tools {
  display: flex;
  gap: 20px;
}
.cmd-view {
  gap: 9px;
}

/* Explorer */
.explorer {
  flex: 1;
  min-height: 0;
  display: flex;
}
.nav-pane {
  flex: none;
  width: 156px;
  padding: 9px 1px 0;
  border-right: 1px solid #d6e5f5;
}
.nav-group {
  margin-bottom: 21px;
}
.nav-item {
  height: 21px;
  display: flex;
  align-items: center;
  gap: 5px;
  padding-left: 18px;
  border: 1px solid transparent;
}
.nav-item.child {
  padding-left: 28px;
}
.nav-item.active {
  border-color: #d9d9d9;
  border-radius: 3px;
  background: linear-gradient(#fafafa, #e4e4e4);
}

/* File List */
.files {
  flex: 1;
  display: grid;
  grid-template-columns: repeat(auto-fill, 250px);
  grid-auto-rows: 52px;
  align-content: start;
  gap: 4px;
  padding: 6px 15px;
}
.file {
  display: flex;
  align-items: center;
  gap: 5px;
  padding-left: 3px;
  border: 1px solid transparent;
  border-radius: 3px;
}
.file.selected {
  border-color: #7da2ce;
  background: linear-gradient(#dcebfc, #c1dbfc);
}
.thumb {
  width: 48px;
  height: 48px;
  flex: none;
}
.info {
  color: #6d6d6d;
  white-space: nowrap;
}
.info .name {
  color: #000;
}

/* Context Menu */
.context-menu {
  position: absolute;
  left: 505px;
  top: 296px;
  width: 223px;
  padding: 2px;
  border: 1px solid #979797;
  background: linear-gradient(to right, transparent 28px, #e2e3e3 28px, #e2e3e3 29px, #fff 29px, #fff 30px, transparent 30px), #f0f0f0;
  box-shadow: 3px 3px 3px rgba(0, 0, 0, 0.5);
}
.menu-item {
  width: 100%;
  height: 22px;
  gap: 13px;
  padding: 0 8px 0 31px;
  border: 1px solid transparent;
  border-radius: 3px;
}
.menu-item .icon {
  margin-left: -29px;
}
.menu-item .tri {
  margin-left: auto;
}
.menu-item.default {
  font-weight: bold;
}
.menu-item.compact {
  height: 21px;
}
.menu-item.hover {
  border-color: #aecff7;
  background: linear-gradient(#f2f5fa, #e7eef8);
}
.context-menu hr {
  height: 2px;
  margin: 3px 0 3px 28px;
  border: none;
  border-top: 1px solid #e0e0e0;
  background-color: #fff;
}
.marker {
  position: absolute;
  left: -10px;
  top: 88px;
  width: 196px;
  height: 32px;
  pointer-events: none;
}

/* Taskbar */
.taskbar {
  flex: none;
  height: 40px;
  display: flex;
  border-top: 1px solid #1f3f5e;
  box-shadow: inset 0 1px 0 rgba(255, 255, 255, 0.4);
  color: #fff;
  background:
    linear-gradient(45deg, transparent 44%, rgba(190, 220, 245, 0.6) 50%, transparent 56%) 746px 0 / 100px 40px no-repeat,
    linear-gradient(to right, #1d6796, #2a80b4 60px, #3595d0 250px, #3494d3 420px, #1f69b6 740px, #1c5296 800px, #174374 900px, #123a6a);
}
.start-btn {
  width: 59px;
  padding-left: 7px;
}
.task-btn {
  width: 60px;
  margin-right: 2px;
  justify-content: center;
  border: 1px solid #1d4666;
  border-radius: 3px;
  box-shadow: inset 0 0 0 1px rgba(255, 255, 255, 0.5);
  background: linear-gradient(135deg, rgba(255, 255, 255, 0.5), rgba(255, 255, 255, 0.2) 50%, rgba(255, 255, 255, 0.1));
}
.task-btn.open {
  background: linear-gradient(135deg, rgba(255, 255, 255, 0.8), rgba(255, 255, 255, 0.5));
}
.tray {
  display: flex;
}
.tray-btn {
  width: 24px;
  justify-content: center;
}
.clock {
  width: 74px;
  flex-direction: column;
  justify-content: center;
}
.show-desktop {
  width: 14px;
  border: 1px solid #5a7ea5;
  background: linear-gradient(135deg, #4f739c, #1c4474 60%);
}
```
